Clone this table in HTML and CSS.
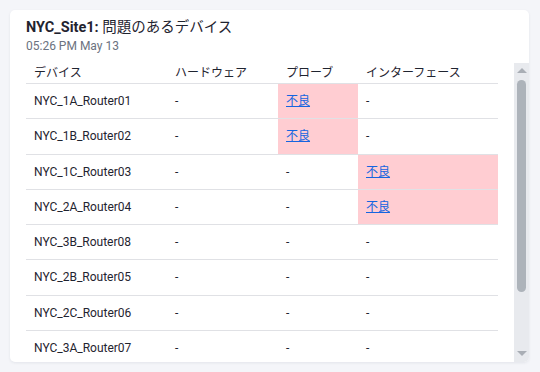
FILE: index.html
```html
<!DOCTYPE html>
<html lang="ja">
<head>
<meta charset="utf-8">
<link rel="stylesheet" href="styles.css">
</head>
<body>
<div class="card">
  <div class="card-head">
    <div class="title"><b>NYC_Site1:</b> 問題のあるデバイス</div>
    <div class="time">05:26 PM May 13</div>
  </div>
  <div class="body">
    <div class="scroll">
      <table class="grid">
        <colgroup>
          <col class="c1"><col class="c2"><col class="c3"><col class="c4">
        </colgroup>
        <thead>
          <tr><th>デバイス</th><th>ハードウェア</th><th>プローブ</th><th>インターフェース</th></tr>
        </thead>
        <tbody>
          <tr><td>NYC_1A_Router01</td><td>-</td><td class="bad"><a href="#">不良</a></td><td>-</td></tr>
          <tr><td>NYC_1B_Router02</td><td>-</td><td class="bad"><a href="#">不良</a></td><td>-</td></tr>
          <tr><td>NYC_1C_Router03</td><td>-</td><td>-</td><td class="bad"><a href="#">不良</a></td></tr>
          <tr><td>NYC_2A_Router04</td><td>-</td><td>-</td><td class="bad"><a href="#">不良</a></td></tr>
          <tr><td>NYC_3B_Router08</td><td>-</td><td>-</td><td>-</td></tr>
          <tr><td>NYC_2B_Router05</td><td>-</td><td>-</td><td>-</td></tr>
          <tr><td>NYC_2C_Router06</td><td>-</td><td>-</td><td>-</td></tr>
          <tr><td>NYC_3A_Router07</td><td>-</td><td>-</td><td>-</td></tr>
        </tbody>
      </table>
    </div>
    <div class="sbar">
      <div class="arrow up"></div>
      <div class="thumb-track"><div class="thumb"></div></div>
      <div class="arrow down"></div>
    </div>
  </div>
</div>
</body>
</html>
```
FILE: styles.css
```css
html, body {
  margin: 0;
  padding: 0;
  background: #f4f5f9;
  font-family: Roboto, "Noto Sans CJK JP", sans-serif;
  color: #1f2430;
}
body {
  padding: 10px 11px 10px 10px;
}
.card {
  background: #fff;
  border-radius: 5px;
  box-shadow: 0 1px 3px rgba(30, 40, 60, 0.08);
  height: 352px;
  display: flex;
  flex-direction: column;
  overflow: hidden;
}
.card-head {
  padding: 8px 16px 0 16px;
  height: 53px;
  box-sizing: border-box;
}
.title {
  font-size: 14.5px;
  line-height: 20px;
  color: #1f2430;
}
.title b {
  font-weight: 700;
}
.time {
  font-size: 12px;
  line-height: 16px;
  color: #6b7280;
}
.body {
  flex: 1;
  display: flex;
  min-height: 0;
  padding-left: 16px;
}
.scroll {
  flex: 1;
  overflow: hidden;
  padding-right: 16px;
}
.grid {
  width: 472px;
  table-layout: fixed;
  border-collapse: collapse;
  font-size: 12px;
}
.c1 { width: 141px; }
.c2 { width: 111px; }
.c3 { width: 80px; }
.c4 { width: 140px; }
.grid th {
  text-align: left;
  font-weight: 400;
  font-size: 12px;
  line-height: 20px;
  padding: 0 8px;
  color: #1f2430;
  border-bottom: 1px solid #e0e1e5;
}
.grid td {
  padding: 8px 8px;
  line-height: 18.3px;
  color: #1f2430;
  border-bottom: 1px solid #e0e1e5;
  white-space: nowrap;
}
.grid td.bad {
  background: #ffcdd2;
}
.grid td.bad a {
  color: #1565e0;
  text-decoration: underline;
}
.sbar {
  width: 15px;
  background: #e8eaee;
  display: flex;
  flex-direction: column;
  align-items: center;
}
.arrow {
  width: 0;
  height: 0;
  border-left: 5px solid transparent;
  border-right: 5px solid transparent;
}
.arrow.up {
  border-bottom: 5px solid #a9aeb5;
  margin-top: 5px;
}
.arrow.down {
  border-top: 5px solid #a9aeb5;
  margin-bottom: 6px;
}
.thumb-track {
  flex: 1;
  width: 100%;
  display: flex;
  justify-content: center;
  padding-top: 7px;
}
.thumb {
  width: 9px;
  height: 212px;
  background: #adb3ba;
  border-radius: 5px;
}
```
